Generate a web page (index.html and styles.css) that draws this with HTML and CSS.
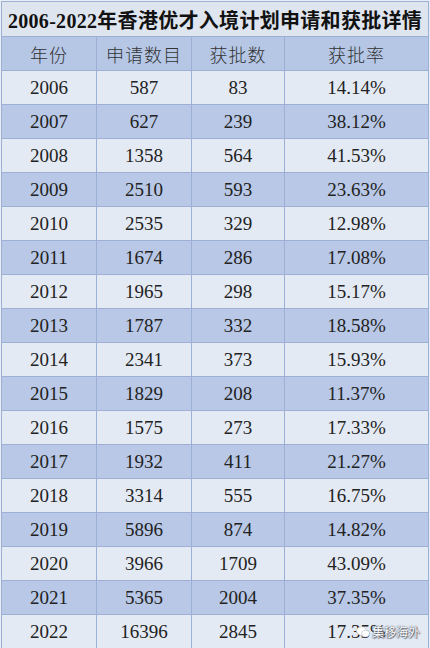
FILE: index.html
```html
<!DOCTYPE html>
<html lang="zh-CN">
<head>
    <meta charset="UTF-8">
    <meta name="viewport" content="width=device-width, initial-scale=1.0">
    <title>香港优才入境计划申请和获批详情</title>
    <link rel="stylesheet" href="styles.css">
</head>
<body>
    <div class="sheet">
        <table class="stats">
            <colgroup>
                <col class="c-year">
                <col class="c-apply">
                <col class="c-ok">
                <col class="c-rate">
            </colgroup>
            <thead>
                <tr class="title-row"><th colspan="4">2006-2022年香港优才入境计划申请和获批详情</th></tr>
                <tr class="head-row"><th>年份</th><th>申请数目</th><th>获批数</th><th>获批率</th></tr>
            </thead>
            <tbody>
                <tr><td>2006</td><td>587</td><td>83</td><td>14.14%</td></tr>
                <tr><td>2007</td><td>627</td><td>239</td><td>38.12%</td></tr>
                <tr><td>2008</td><td>1358</td><td>564</td><td>41.53%</td></tr>
                <tr><td>2009</td><td>2510</td><td>593</td><td>23.63%</td></tr>
                <tr><td>2010</td><td>2535</td><td>329</td><td>12.98%</td></tr>
                <tr><td>2011</td><td>1674</td><td>286</td><td>17.08%</td></tr>
                <tr><td>2012</td><td>1965</td><td>298</td><td>15.17%</td></tr>
                <tr><td>2013</td><td>1787</td><td>332</td><td>18.58%</td></tr>
                <tr><td>2014</td><td>2341</td><td>373</td><td>15.93%</td></tr>
                <tr><td>2015</td><td>1829</td><td>208</td><td>11.37%</td></tr>
                <tr><td>2016</td><td>1575</td><td>273</td><td>17.33%</td></tr>
                <tr><td>2017</td><td>1932</td><td>411</td><td>21.27%</td></tr>
                <tr><td>2018</td><td>3314</td><td>555</td><td>16.75%</td></tr>
                <tr><td>2019</td><td>5896</td><td>874</td><td>14.82%</td></tr>
                <tr><td>2020</td><td>3966</td><td>1709</td><td>43.09%</td></tr>
                <tr><td>2021</td><td>5365</td><td>2004</td><td>37.35%</td></tr>
                <tr><td>2022</td><td>16396</td><td>2845</td><td>17.35%</td></tr>
            </tbody>
        </table>

        <!-- watermark over the last row -->
        <div class="watermark">
            <svg width="14" height="12" viewBox="0 0 14 12">
                <ellipse cx="5.5" cy="5" rx="5" ry="4.2" fill="#fff" stroke="#b8bec8" stroke-width="0.6"/>
                <ellipse cx="9.5" cy="7.5" rx="4" ry="3.4" fill="#fff" stroke="#b8bec8" stroke-width="0.6"/>
            </svg>
            <span>集移海外</span>
        </div>
    </div>
</body>
</html>
```

FILE: styles.css
```css
* {
    margin: 0;
    padding: 0;
    box-sizing: border-box;
}

body {
    background: #e9eef6;
    font-family: "Liberation Serif", "Noto Sans CJK SC", serif;
    color: #222;
}

.sheet {
    position: relative;
    width: 430px;
    height: 648px;
    padding: 1px 2px 0 1px;
}

.stats {
    width: 427px;
    border-collapse: collapse;
    table-layout: fixed;
}

.c-year { width: 95px; }
.c-apply { width: 95px; }
.c-ok { width: 93px; }
.c-rate { width: 144px; }

.stats th,
.stats td {
    border: 1px solid #9cb0d6;
    text-align: center;
    font-weight: normal;
}

.title-row th {
    height: 35px;
    background: #dfe5ef;
    font-weight: 700;
    font-size: 20px;
    letter-spacing: 0.3px;
    color: #111;
    white-space: nowrap;
}

.head-row th {
    height: 34px;
    background: #b6c7e6;
    font-family: "Noto Sans CJK SC", sans-serif;
    font-size: 18px;
    font-weight: 300;
    letter-spacing: 1px;
    color: #333;
}

.stats td {
    height: 34px;
    font-size: 19px;
    color: #222;
}

.stats tbody tr:nth-child(odd) td {
    background: #e4eaf4;
}

.stats tbody tr:nth-child(even) td {
    background: #b8c8e6;
}

.watermark {
    position: absolute;
    left: 356px;
    top: 623px;
    display: flex;
    align-items: center;
    gap: 2px;
}

.watermark span {
    font-family: "Noto Sans CJK SC", sans-serif;
    font-size: 12px;
    color: #fff;
    text-shadow: 0 0 1px #4a505c, 0 0 2px #6a7280, 1px 1px 1px #6a7280;
}
```
